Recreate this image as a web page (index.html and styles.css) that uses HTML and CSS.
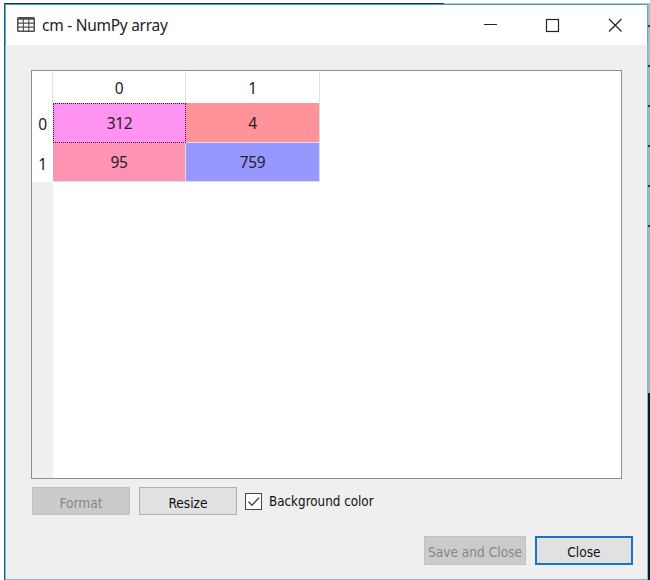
FILE: index.html
```html
<!DOCTYPE html>
<html lang="en">
<head>
<meta charset="utf-8">
<title>cm - NumPy array</title>
<link rel="stylesheet" href="styles.css">
</head>
<body>
<div class="desktop">
<main class="window">
  <header class="titlebar">
    <svg class="app-icon" width="18" height="15" viewBox="0 0 18 15"><rect width="18" height="15" rx="1.5" fill="#504c50"/><path fill="#fff" d="M1.500 2.800h4.300v2.600H1.500zM6.900 2.800h4.300v2.600H6.900zM12.300 2.800h4.200v2.600h-4.200zM1.500 6.800h4.300v2.600H1.500zM6.900 6.800h4.300v2.600H6.900zM12.300 6.800h4.200v2.600h-4.200zM1.500 10.800h4.300v2.600H1.500zM6.900 10.800h4.300v2.600H6.900zM12.300 10.800h4.200v2.600h-4.200z"/></svg>
    <h1 class="title">cm - NumPy array</h1>
    <svg class="controls" width="140" height="15" viewBox="0 0 140 15" fill="none" stroke="#222" stroke-width="1.2"><path d="M1 6.500h13" stroke-width="1"/><rect x="63.500" y="1.500" width="12" height="12"/><path d="M126 1l12.500 12.500M138.500 1L126 13.500"/></svg>
  </header>
  <section class="content">
    <div class="table-view">
      <div class="grid">
        <div class="head corner"></div><div class="head">0</div><div class="head">1</div>
        <div class="row-head">0</div><div class="cell violet">312</div><div class="cell red">4</div>
        <div class="row-head">1</div><div class="cell pink">95</div><div class="cell blue">759</div>
      </div>
      <div class="header-rest"></div>
    </div>
    <div class="options">
      <button class="button disabled format" disabled>Format</button>
      <button class="button resize">Resize</button>
      <div class="check">
        <svg width="17" height="17" viewBox="0 0 17 17" fill="none"><rect x=".5" y=".5" width="16" height="16" fill="#fff" stroke="#444"/><path d="M3.500 8.800l3.400 3.400L14 4.800" stroke="#444" stroke-width="1.4"/></svg>
        <span class="check-label">Background color</span>
      </div>
    </div>
    <div class="actions">
      <button class="button disabled save" disabled>Save and Close</button>
      <button class="button default">Close</button>
    </div>
  </section>
</main>
<div class="edge"></div>
</div>
</body>
</html>
```
FILE: styles.css
```css
* { box-sizing: border-box; }
body { margin: 0; background: #fff; }
.desktop { width: 650px; height: 580px; padding: 3px 0 0 4px; display: flex; overflow: hidden; }
.window {
  width: 644px; height: 577px; display: flex; flex-direction: column;
  background: linear-gradient(90deg, #193b46 440px, #b3cbd0 440px) top / 100% 1px no-repeat, #146078;
  padding: 1px 0 0 1px;
}
.titlebar {
  height: 41px; flex: none; display: flex; align-items: center; background: #fff;
  border: 1px solid #64adbd; border-top-color: #4899aa; border-bottom: 0;
  padding: 0 24px 0 11px;
}
.app-icon { margin-top: -1px; }
.title { margin: -1px 0 0 7px; flex: 1; font: 400 15.5px/24px "Noto Sans", sans-serif; letter-spacing: -0.27px; color: #222; }
.content {
  flex: 1; background: #efefef; border: 1px solid #82bcc9; border-top: 0;
  padding: 25px 25px 0;
}
.table-view {
  width: 591px; height: 409px; background: #fff; border: 1px solid #8c8f94;
  display: flex; flex-direction: column;
}
.grid {
  display: grid; grid-template-columns: 21px 133px 134px; grid-template-rows: 32px 40px 39px;
  font: 15.5px/20px "Noto Sans", sans-serif; letter-spacing: -0.3px; color: #222;
}
.head { border-right: 1px solid #e2e2e2; display: flex; align-items: center; justify-content: center; padding-top: 2px; }
.row-head { display: flex; align-items: center; justify-content: center; padding-top: 2px; }
.cell { display: flex; align-items: center; justify-content: center; color: #281c28; border-right: 1px solid #dcdce4; border-bottom: 1px solid #dcdce4; }
.violet { background: #ff93f2; border: 1px dotted #301830; }
.red { background: #ff9399; }
.pink { background: #ff93b3; }
.blue { background: #9698ff; }
.header-rest { width: 21px; flex: 1; background: #efefef; }
.options { display: flex; margin: 8px 0 0 1px; height: 28px; }
.button {
  width: 98px; height: 28px; padding: 3px 0 0; background: #e1e1e1; border: 1px solid #b0b0b0;
  font: 13.6px/20px "DejaVu Sans Condensed", "DejaVu Sans", sans-serif; color: #111;
}
.disabled { background: #cbcbcb; border-color: #c1c1c1; color: #868686; }
.resize { margin-left: 9px; }
.check { display: flex; align-items: center; margin-left: 8px; }
.check-label { margin-left: 7px; padding-top: 2px; font: 13.3px/20px "DejaVu Sans Condensed", "DejaVu Sans", sans-serif; color: #111; white-space: nowrap; }
.actions { display: flex; justify-content: flex-end; margin: 21px -11px 0 0; gap: 9px; }
.save { width: 102px; height: 29px; white-space: nowrap; }
.default { height: 29px; border: 2px solid #1975c8; }
.edge {
  width: 2px; height: 577px;
  background: repeating-linear-gradient(transparent 0 22px, #263f45 22px 24px, transparent 24px 40px) top / 100% 240px no-repeat,
    linear-gradient(#9bc3cc 0 60px, #79c4cf 60px 220px, #95bac3 220px 390px, #071d27 390px);
}
```
